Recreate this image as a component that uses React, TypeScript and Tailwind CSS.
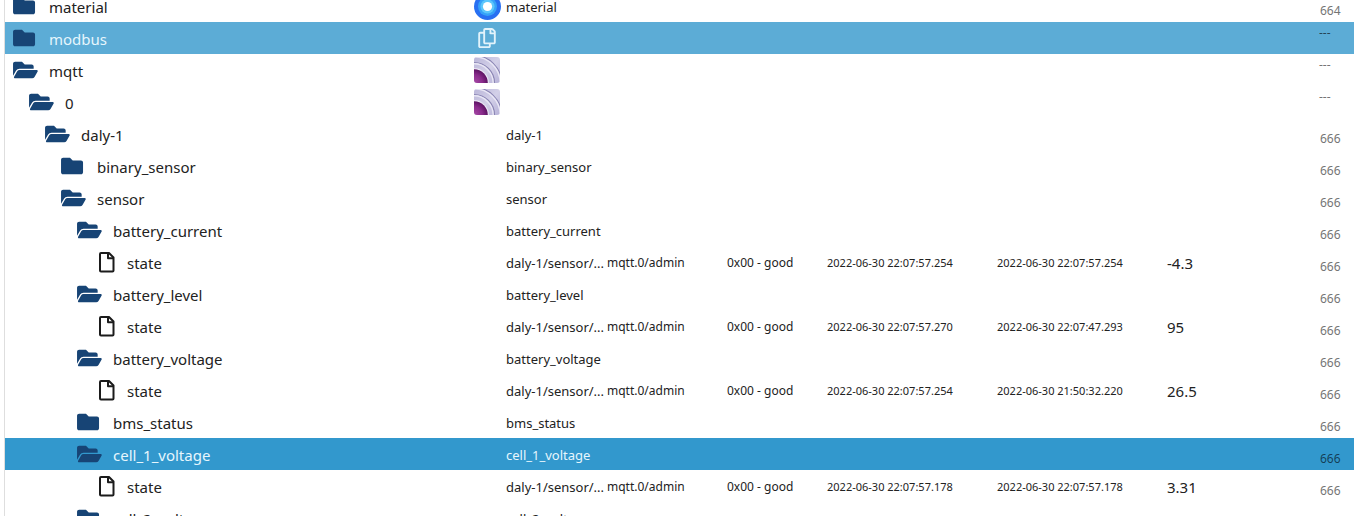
import React from "react";
import { FaRegCopy } from "react-icons/fa";

type Kind = "closed" | "open" | "file";

interface Row {
  name: string;
  level: number;
  kind: Kind;
  icon?: "material" | "copy" | "mqtt";
  desc?: string;
  from?: string;
  ts?: string;
  lc?: string;
  value?: string;
  perm: string;
  tone?: "light" | "dark";
}

const state = (ts: string, lc: string, value: string): Row => ({
  name: "state",
  level: 5,
  kind: "file",
  desc: "daly-1/sensor/...",
  from: "mqtt.0/admin",
  ts: "2022-06-30 " + ts,
  lc: "2022-06-30 " + lc,
  value,
  perm: "666",
});

const folder = (name: string, level: number, kind: Kind, tone?: "dark"): Row => ({
  name,
  level,
  kind,
  desc: name,
  perm: "666",
  tone,
});

const rows: Row[] = [
  { name: "material", level: 0, kind: "closed", icon: "material", desc: "material", perm: "664" },
  { name: "modbus", level: 0, kind: "closed", icon: "copy", perm: "---", tone: "light" },
  { name: "mqtt", level: 0, kind: "open", icon: "mqtt", perm: "---" },
  { name: "0", level: 1, kind: "open", icon: "mqtt", perm: "---" },
  folder("daly-1", 2, "open"),
  folder("binary_sensor", 3, "closed"),
  folder("sensor", 3, "open"),
  folder("battery_current", 4, "open"),
  state("22:07:57.254", "22:07:57.254", "-4.3"),
  folder("battery_level", 4, "open"),
  state("22:07:57.270", "22:07:47.293", "95"),
  folder("battery_voltage", 4, "open"),
  state("22:07:57.254", "21:50:32.220", "26.5"),
  folder("bms_status", 4, "closed"),
  folder("cell_1_voltage", 4, "open", "dark"),
  state("22:07:57.178", "22:07:57.178", "3.31"),
  folder("cell_2_voltage", 4, "closed"),
];

const indents = ["pl-2", "pl-6", "pl-10", "pl-14", "pl-18", "pl-22"];

function TreeIcon({ kind }: { kind: Kind }) {
  if (kind === "file") {
    return (
      <svg viewBox="0 0 28 22" className="h-[22px] w-7 shrink-0" fill="none" stroke="#1b1b1b" strokeWidth="2" strokeLinejoin="round">
        <path d="M8 2h8l4.500 4.500v13a1 1 0 0 1-1 1H8a1 1 0 0 1-1-1V3a1 1 0 0 1 1-1z" />
        <path d="M15 2v5.200H20.500" />
      </svg>
    );
  }
  return (
    <svg viewBox="0 0 650 512" className="h-[22px] w-7 shrink-0" fill="#174475">
      {kind === "closed" ? (
        <path d="M464 128H272l-64-64H48C21.490 64 0 85.490 0 112v288c0 26.510 21.490 48 48 48h416c26.510 0 48-21.490 48-48V176c0-26.510-21.490-48-48-48z" />
      ) : (
        <path d="M572.694 292.093L500.270 416.248A63.997 63.997 0 0 1 444.989 448H45.025c-18.523 0-30.064-20.093-20.731-36.093l72.424-124.155A64 64 0 0 1 152 256h399.964c18.523 0 30.064 20.093 20.730 36.093zM152 224h328v-48c0-26.510-21.490-48-48-48H272l-64-64H48C21.490 64 0 85.490 0 112v278.046l69.077-118.418C86.214 242.250 117.989 224 152 224z" />
      )}
    </svg>
  );
}

function AdapterIcon({ icon }: { icon: Row["icon"] }) {
  if (icon === "copy") return <FaRegCopy className="ml-1 h-5 w-[18px] text-[#e2f3fb]" />;
  if (icon === "material")
    return (
      <svg viewBox="0 0 28 28" className="size-7">
        <circle cx="13.500" cy="14.500" r="13.500" fill="#2870f2" />
        <circle cx="13.500" cy="14.500" r="9.500" fill="#36a2f8" />
        <circle cx="13.500" cy="14.500" r="7" fill="#5cc6fb" />
        <circle cx="13.500" cy="14.500" r="4.600" fill="#fff" />
      </svg>
    );
  if (icon === "mqtt")
    return (
      <svg viewBox="0 0 28 28" className="size-7">
        <defs>
          <radialGradient id="core" cx="0.5" cy="0.5" r="0.5">
            <stop offset="0" stopColor="#a84aa6" />
            <stop offset="0.6" stopColor="#8a2c8c" />
            <stop offset="1" stopColor="#5c1262" />
          </radialGradient>
          <linearGradient id="field" x1="0" y1="0" x2="1" y2="1">
            <stop offset="0" stopColor="#b9b5d8" />
            <stop offset="0.5" stopColor="#d3d0e8" />
            <stop offset="1" stopColor="#b3aed6" />
          </linearGradient>
          <clipPath id="tile">
            <rect x="0" y="1" width="26" height="26" rx="3" />
          </clipPath>
        </defs>
        <g clipPath="url(#tile)">
          <rect width="28" height="28" fill="url(#field)" />
          <g fill="none">
            <circle cx="0" cy="27" r="27.500" stroke="#8b86b4" strokeWidth="1.200" />
            <circle cx="0" cy="27" r="26.200" stroke="#e9e7f5" strokeWidth="1.400" />
            <circle cx="0" cy="27" r="20.500" stroke="#8b86b4" strokeWidth="1.200" />
            <circle cx="0" cy="27" r="19.200" stroke="#e9e7f5" strokeWidth="1.400" />
          </g>
          <circle cx="0" cy="27" r="15" fill="#e9e6f4" />
          <circle cx="0" cy="27" r="13.800" fill="url(#core)" />
        </g>
      </svg>
    );
  return null;
}

function TreeRow({ row }: { row: Row }) {
  const tone =
    row.tone === "light" ? "bg-[#5cacd6] text-[#e6f6fd]" : row.tone === "dark" ? "bg-[#3298cd] text-[#e6f6fd]" : "text-[#222]";
  return (
    <tr className={"h-8 " + tone}>
      <td className="p-0">
        <div className={"flex h-8 items-center text-[15px] " + indents[row.level]}>
          <TreeIcon kind={row.kind} />
          <span className={row.kind === "file" ? "ml-1.5 pt-0.5" : "ml-2 pt-0.5"}>{row.name}</span>
        </div>
      </td>
      <td className="p-0 pl-px">
        <AdapterIcon icon={row.icon} />
      </td>
      <td className="truncate p-0 pt-1 text-[13px]">{row.desc}</td>
      <td className="p-0 pt-0.5 text-xs">{row.from}</td>
      <td className="p-0 pt-0.5 text-xs">{row.from && "0x00 - good"}</td>
      <td className="p-0 pt-0.5 text-[11px]">{row.ts}</td>
      <td className="p-0 pt-0.5 text-[11px]">{row.lc}</td>
      <td className="p-0 pt-0.5 text-[15px]">{row.value}</td>
      <td
        className={
          (row.tone ? "text-black/60 " : "text-[#757575] ") +
          (row.perm === "---" ? "p-0 pt-[3px] align-top text-xs" : "p-0 pt-2.5 pl-px text-xs")
        }
      >
        {row.perm}
      </td>
    </tr>
  );
}

export default function App() {
  return (
    <main className="h-screen overflow-hidden bg-white pl-1 font-['Noto_Sans','Open_Sans',sans-serif]">
      <div className="-mt-2.5 border-l border-[#dedede]">
        <table className="w-full table-fixed border-collapse whitespace-nowrap">
          <colgroup>
            <col />
            <col className="w-[33px]" />
            <col className="w-[101px]" />
            <col className="w-[120px]" />
            <col className="w-[100px]" />
            <col className="w-[170px]" />
            <col className="w-[170px]" />
            <col className="w-[152px]" />
            <col className="w-[35px]" />
          </colgroup>
          <tbody>
            {rows.map((row, i) => (
              <TreeRow key={i} row={row} />
            ))}
          </tbody>
        </table>
      </div>
    </main>
  );
}
